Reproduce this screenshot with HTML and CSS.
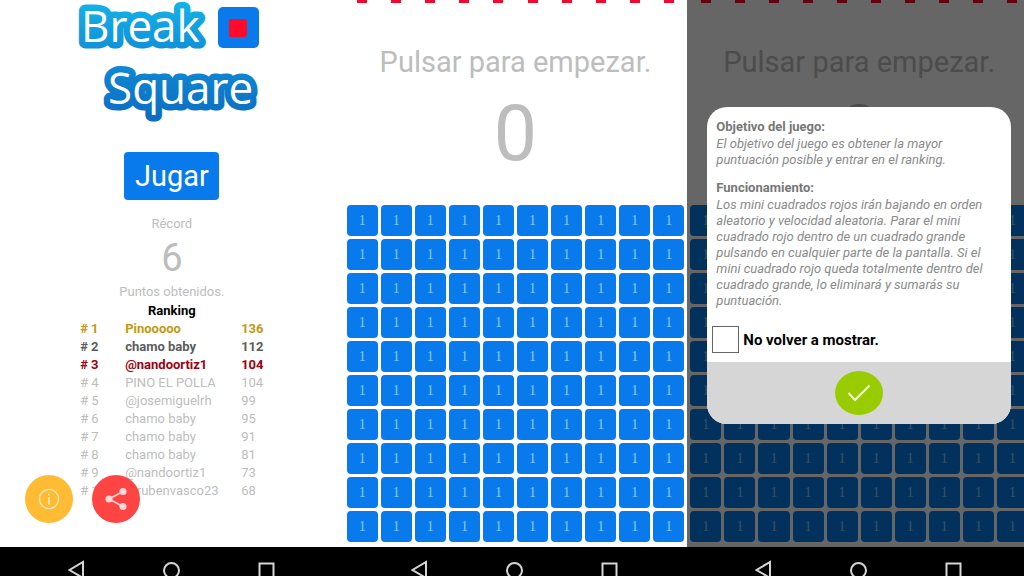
FILE: index.html
```html
<!DOCTYPE html>
<html lang="es">
<head>
    <meta charset="UTF-8">
    <meta name="viewport" content="width=device-width, initial-scale=1.0">
    <title>Break Square</title>
    <link rel="stylesheet" href="styles.css">
</head>
<body>
    <!-- Shared icons -->
    <svg class="sprite" aria-hidden="true">
        <symbol id="nav-back" viewBox="0 0 18 20"><path d="M15 2v16L1.500 10z"/></symbol>
        <symbol id="nav-home" viewBox="0 0 18 20"><circle cx="8.500" cy="10.500" r="7.500"/></symbol>
        <symbol id="nav-recent" viewBox="0 0 18 20"><path d="M1.500 3.500h14v14h-14z"/></symbol>
    </svg>

    <main class="phones">
        <!-- Home -->
        <section class="phone">
            <div class="screen home">
                <svg class="logo" viewBox="0 0 190 124" role="img" aria-label="Break Square">
                    <defs>
                        <linearGradient id="glow" gradientUnits="userSpaceOnUse" x1="0" y1="0" x2="0" y2="120">
                            <stop offset="0" stop-color="#14b4e8"/>
                            <stop offset="0.4" stop-color="#1192d8"/>
                            <stop offset="1" stop-color="#0b6cc2"/>
                        </linearGradient>
                    </defs>
                    <text class="logo-text" x="4" y="42">Break</text>
                    <text class="logo-text" x="31" y="104">Square</text>
                    <rect x="141" y="7" width="41" height="41" rx="5" fill="#087aec"/>
                    <rect x="152" y="19" width="18" height="18" rx="2" fill="#ff0a2a"/>
                </svg>
                <button class="play" type="button">Jugar</button>
                <p class="small">Récord</p>
                <p class="record">6</p>
                <p class="small">Puntos obtenidos.</p>
                <table class="ranking">
                    <caption>Ranking</caption>
                    <tbody>
                        <tr class="gold"><td># 1</td><td>Pinooooo</td><td>136</td></tr>
                        <tr class="silver"><td># 2</td><td>chamo baby</td><td>112</td></tr>
                        <tr class="bronze"><td># 3</td><td>@nandoortiz1</td><td>104</td></tr>
                        <tr><td># 4</td><td>PINO EL POLLA</td><td>104</td></tr>
                        <tr><td># 5</td><td>@josemiguelrh</td><td>99</td></tr>
                        <tr><td># 6</td><td>chamo baby</td><td>95</td></tr>
                        <tr><td># 7</td><td>chamo baby</td><td>91</td></tr>
                        <tr><td># 8</td><td>chamo baby</td><td>81</td></tr>
                        <tr><td># 9</td><td>@nandoortiz1</td><td>73</td></tr>
                        <tr><td># 10</td><td>@rubenvasco23</td><td>68</td></tr>
                    </tbody>
                </table>
                <div class="fabs">
                    <button class="fab info" type="button" aria-label="Información">
                        <svg viewBox="0 0 24 24" width="24" height="24" fill="none" stroke="#ffe9b0" stroke-width="1.4">
                            <circle cx="12" cy="12" r="9.6"/>
                            <path d="M12 10v7.4M12 6.6v1.8" stroke-width="1.8"/>
                        </svg>
                    </button>
                    <button class="fab share" type="button" aria-label="Compartir">
                        <svg viewBox="0 0 24 24" width="24" height="24" fill="#ffd6d6" stroke="#ffd6d6" stroke-width="1.6">
                            <path d="M19 4.5L5 12l14 7.5" fill="none"/>
                            <circle cx="19" cy="4.5" r="2.8"/>
                            <circle cx="5" cy="12" r="2.8"/>
                            <circle cx="19" cy="19.5" r="2.8"/>
                        </svg>
                    </button>
                </div>
            </div>
            <nav class="navbar">
                <svg><use href="#nav-back"/></svg>
                <svg><use href="#nav-home"/></svg>
                <svg><use href="#nav-recent"/></svg>
            </nav>
        </section>

        <!-- Game -->
        <section class="phone">
            <div class="screen">
                <div class="drops"></div>
                <div class="status">
                    <p class="hint">Pulsar para empezar.</p>
                    <p class="score">0</p>
                </div>
                <div class="board"></div>
            </div>
            <nav class="navbar">
                <svg><use href="#nav-back"/></svg>
                <svg><use href="#nav-home"/></svg>
                <svg><use href="#nav-recent"/></svg>
            </nav>
        </section>

        <!-- Game with the help dialog open -->
        <section class="phone">
            <div class="screen">
                <div class="drops"></div>
                <div class="status">
                    <p class="hint">Pulsar para empezar.</p>
                    <p class="score">0</p>
                </div>
                <div class="board"></div>
                <div class="overlay">
                    <div class="dialog" role="dialog" aria-label="Objetivo del juego">
                        <div class="dialog-body">
                            <h2>Objetivo del juego:</h2>
                            <p>El objetivo del juego es obtener la mayor puntuación posible y entrar en el ranking.</p>
                            <h2>Funcionamiento:</h2>
                            <p>Los mini cuadrados rojos irán bajando en orden aleatorio y velocidad aleatoria. Parar el mini cuadrado rojo dentro de un cuadrado grande pulsando en cualquier parte de la pantalla. Si el mini cuadrado rojo queda totalmente dentro del cuadrado grande, lo eliminará y sumarás su puntuación.</p>
                        </div>
                        <div class="option">
                            <input type="checkbox" id="hide">
                            <label for="hide">No volver a mostrar.</label>
                        </div>
                        <div class="dialog-footer">
                            <button class="accept" type="button" aria-label="Aceptar">
                                <svg viewBox="0 0 24 18" width="24" height="18" fill="none" stroke="#f2ffd0" stroke-width="2">
                                    <path d="M1.5 9l6.5 7L22.5 1.5"/>
                                </svg>
                            </button>
                        </div>
                    </div>
                </div>
            </div>
            <nav class="navbar">
                <svg><use href="#nav-back"/></svg>
                <svg><use href="#nav-home"/></svg>
                <svg><use href="#nav-recent"/></svg>
            </nav>
        </section>
    </main>

    <script src="script.js"></script>
</body>
</html>
```
FILE: styles.css
```css
* {
    box-sizing: border-box;
}
body {
    margin: 0;
    overflow: hidden;
    font-family: Roboto, "Liberation Sans", sans-serif;
    font-size: 13px;
    color: #bdbdbd;
    background-color: #fff;
}
p, h2 {
    margin: 0;
}
button {
    padding: 0;
    border: none;
    font-family: inherit;
    cursor: pointer;
}
.sprite {
    display: none;
}
/* The last phone runs a little past the window */
.phones {
    display: grid;
    grid-template-columns: repeat(3, 1fr);
    width: calc(100% + 7px);
    min-height: 100vh;
}
.phone {
    display: flex;
    flex-direction: column;
}
.screen {
    position: relative;
    flex: 1;
    padding: 0 3px 5px;
}
.navbar {
    display: flex;
    justify-content: center;
    gap: 77px;
    height: 29px;
    padding-top: 13px;
    overflow: hidden;
    background-color: #000;
}
.navbar svg {
    flex: none;
    width: 18px;
    height: 20px;
    fill: none;
    stroke: #d6d6d6;
    stroke-width: 2;
}
/* Home */
.home {
    display: flex;
    flex-direction: column;
    align-items: center;
}
.logo {
    width: 190px;
    height: 124px;
    overflow: visible;
}
.logo-text {
    font-family: "Open Sans", "Noto Sans", sans-serif;
    font-size: 44px;
    fill: #fff;
    stroke: url(#glow);
    stroke-width: 13px;
    stroke-linejoin: round;
    paint-order: stroke;
}
.play {
    width: 95px;
    height: 48px;
    margin: 28px 0 14px;
    border-radius: 4px;
    font-size: 29px;
    color: #fff;
    background-color: #087aec;
}
.small {
    line-height: 20px;
}
.record {
    font-size: 38px;
    line-height: 48px;
}
.ranking {
    border-collapse: collapse;
    line-height: 18px;
}
.ranking caption {
    font-weight: bold;
    color: #000;
}
.ranking td {
    padding: 0;
    white-space: nowrap;
}
.ranking td:first-child {
    width: 45px;
}
.ranking td:nth-child(2) {
    width: 116px;
}
.gold, .silver, .bronze {
    font-weight: bold;
}
.gold {
    color: #c4990f;
}
.silver {
    color: #5c5c5c;
}
.bronze {
    color: #a00010;
}
.fabs {
    position: absolute;
    left: 25px;
    bottom: 24px;
    display: flex;
    gap: 19px;
}
.fab {
    display: flex;
    justify-content: center;
    align-items: center;
    width: 48px;
    height: 48px;
    border-radius: 50%;
}
.info {
    background-color: #ffbb33;
}
.share {
    background-color: #ff4444;
}
/* Game */
.drops, .board {
    display: grid;
    grid-template-columns: repeat(10, 1fr);
    gap: 3px;
}
.drop {
    width: 10px;
    height: 3px;
    justify-self: center;
    background-color: #f5082d;
}
.status {
    height: 202px;
    padding-top: 39px;
    text-align: center;
}
.hint {
    font-size: 29px;
    line-height: 40px;
}
.score {
    font-size: 77px;
    line-height: 104px;
}
.cell {
    display: flex;
    justify-content: center;
    align-items: center;
    height: 31px;
    border-radius: 4px;
    font-family: "Liberation Serif", serif;
    font-size: 14px;
    color: #86cdf8;
    background-color: #087aec;
}
/* Help dialog */
.overlay {
    position: absolute;
    inset: 0;
    padding: 107px 20px 0;
    background-color: rgba(0, 0, 0, 0.6);
}
.dialog {
    overflow: hidden;
    border-radius: 20px;
    color: #8a8a8a;
    background-color: #fff;
}
.dialog-body {
    padding: 10px 12px 0 9px;
    line-height: 16px;
}
.dialog-body h2 {
    font-size: 13px;
    line-height: 19px;
    color: #777;
}
.dialog-body p {
    margin-bottom: 10px;
    font-style: italic;
}
.option {
    display: flex;
    align-items: center;
    gap: 4px;
    padding: 7px 5px 9px;
    font-size: 15px;
    font-weight: bold;
    color: #000;
}
.option input {
    appearance: none;
    width: 27px;
    height: 27px;
    margin: 0;
    border: 1px solid #666;
}
.dialog-footer {
    display: flex;
    justify-content: center;
    padding: 9px;
    background-color: #d6d6d6;
}
.accept {
    display: flex;
    justify-content: center;
    align-items: center;
    width: 48px;
    height: 44px;
    border-radius: 50%;
    background-color: #99cc00;
}
```
FILE: script.js
```js
const columns = 10;
const rows = 10;

function fill(selector, className, count, text) {
    document.querySelectorAll(selector).forEach(parent => {
        for (let i = 0; i < count; i++) {
            const item = document.createElement('div');
            item.className = className;
            item.textContent = text;
            parent.appendChild(item);
        }
    });
}

fill('.drops', 'drop', columns, '');
fill('.board', 'cell', columns * rows, '1');
```
